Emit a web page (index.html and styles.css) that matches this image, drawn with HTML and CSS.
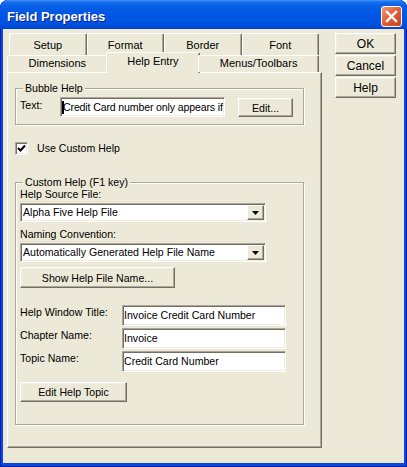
FILE: index.html
```html
<!DOCTYPE html>
<html lang="en">
<head>
    <meta charset="UTF-8">
    <meta name="viewport" content="width=device-width, initial-scale=1.0">
    <title>Field Properties</title>
    <link rel="stylesheet" href="styles.css">
</head>
<body>
    <div class="window">
        <div class="titlebar">
            <span class="title">Field Properties</span>
            <span class="close">
                <svg width="13" height="13" viewBox="0 0 13 13">
                    <path d="M2 2 L11 11 M11 2 L2 11" stroke="#fff" stroke-width="2.4" stroke-linecap="square"/>
                </svg>
            </span>
        </div>

        <div class="client">
            <div class="sheet">
                <!-- back row of tabs -->
                <div class="tabrow back">
                    <div class="tab">Setup</div>
                    <div class="tab">Format</div>
                    <div class="tab">Border</div>
                    <div class="tab">Font</div>
                </div>
                <!-- front row, the selected tab sits here -->
                <div class="tabrow front">
                    <div class="tab">Dimensions</div>
                    <div class="tab active">Help Entry</div>
                    <div class="tab">Menus/Toolbars</div>
                </div>

                <div class="panel">
                    <fieldset class="group bubble">
                        <legend>Bubble Help</legend>
                        <div class="row">
                            <span class="lbl-text">Text:</span>
                            <div class="field bubble-field"><span class="caret"></span>Credit Card number only appears if</div>
                            <button class="btn edit-btn">Edit...</button>
                        </div>
                    </fieldset>

                    <label class="check">
                        <span class="checkbox">
                            <svg width="9" height="9" viewBox="0 0 9 9">
                                <path d="M1 4 L3.5 6.5 L8 1.5" fill="none" stroke="#000" stroke-width="2"/>
                            </svg>
                        </span>
                        Use Custom Help
                    </label>

                    <fieldset class="group custom">
                        <legend>Custom Help (F1 key)</legend>
                        <div class="caption first">Help Source File:</div>
                        <div class="combo">
                            <span class="combo-text">Alpha Five Help File</span>
                            <span class="combo-arrow">
                                <svg width="7" height="4" viewBox="0 0 7 4"><polygon points="0,0 7,0 3.5,4" fill="#000"/></svg>
                            </span>
                        </div>
                        <div class="caption">Naming Convention:</div>
                        <div class="combo">
                            <span class="combo-text">Automatically Generated Help File Name</span>
                            <span class="combo-arrow">
                                <svg width="7" height="4" viewBox="0 0 7 4"><polygon points="0,0 7,0 3.5,4" fill="#000"/></svg>
                            </span>
                        </div>
                        <button class="btn show-btn">Show Help File Name...</button>

                        <div class="help-grid">
                            <span class="lbl">Help Window Title:</span>
                            <div class="field">Invoice Credit Card Number</div>
                            <span class="lbl">Chapter Name:</span>
                            <div class="field">Invoice</div>
                            <span class="lbl">Topic Name:</span>
                            <div class="field">Credit Card Number</div>
                        </div>

                        <button class="btn topic-btn">Edit Help Topic</button>
                    </fieldset>
                </div>
            </div>

            <div class="actions">
                <button class="btn">OK</button>
                <button class="btn">Cancel</button>
                <button class="btn">Help</button>
            </div>
        </div>
    </div>
</body>
</html>
```

FILE: styles.css
```css
body {
    margin: 0;
    background: #fff;
    font-family: "Liberation Sans", Arial, sans-serif;
    font-size: 10.6px;
    color: #000;
}

/* window frame */
.window {
    width: 407px;
    height: 467px;
    box-sizing: border-box;
    display: flex;
    flex-direction: column;
    background: #0a47e0;
    border-radius: 8px 8px 0 0;
    box-shadow: inset 1px 0 #001ea8, inset -1px 0 #001ea8, inset 0 -1px #001ea8;
    overflow: hidden;
}
.titlebar {
    height: 29px;
    flex: none;
    box-sizing: border-box;
    display: flex;
    align-items: center;
    padding: 3px 5px 0 7px;
    border-radius: 8px 8px 0 0;
    background: linear-gradient(#4a93f7 0px, #1570ee 2px, #0a62e8 5px, #0058e4 12px, #0054e2 22px, #004bd6 27px, #0044c8 29px);
}
.title {
    flex: 1;
    color: #fff;
    font-weight: bold;
    font-size: 13px;
    text-shadow: 1px 1px #0a1e8a;
}
.close {
    width: 21px;
    height: 21px;
    box-sizing: border-box;
    display: flex;
    align-items: center;
    justify-content: center;
    border: 1px solid #fff;
    border-radius: 3px;
    background: linear-gradient(135deg, #f09a7c 0%, #e0603c 45%, #c8401c 100%);
}

.client {
    flex: 1;
    margin: 0 3px 4px;
    background: #ece9d8;
    display: flex;
    align-items: flex-start;
}

/* tabs */
.sheet {
    margin: 4px 0 0 4px;
    width: 315px;
}
.tabrow {
    display: flex;
}
.tabrow.back {
    margin-left: 2px;
    width: 310px;
    height: 22px;
}
.tabrow.front {
    width: 312px;
    height: 17px;
    position: relative;
    z-index: 1;
}
.tab {
    box-sizing: border-box;
    border: 1px solid;
    border-color: #fff #716f64 transparent #fff;
    border-bottom: 0;
    border-radius: 2px 2px 0 0;
    box-shadow: inset -1px 0 #aca899;
    background: #ece9d8;
    text-align: center;
    font-size: 11px;
    line-height: 13px;
    white-space: nowrap;
}
.back .tab {
    flex: 1;
    padding-top: 5px;
}
.front .tab {
    flex: auto;
    padding: 1px 8px 0;
}
.front .tab.active {
    height: 21px;
    margin: -3px -2px 0;
    padding-top: 2px;
}

/* tab page */
.panel {
    box-sizing: border-box;
    height: 376px;
    border: 1px solid;
    border-color: #fff #716f64 #716f64 #fff;
    box-shadow: inset -1px -1px #aca899;
    padding: 0 17px 0 7px;
}
.group {
    margin: 9px 0 0;
    padding: 0 4px 7px;
    min-width: 0;
    border: 1px solid #aca899;
    box-shadow: inset 1px 1px #fff, 1px 1px #fff;
}
.group legend {
    margin-left: 3px;
    padding: 0 2px;
    line-height: 13px;
    background: #ece9d8;
}

.row {
    display: flex;
    align-items: flex-start;
    margin-top: 2px;
}
.lbl-text {
    width: 40px;
    padding-top: 2px;
    line-height: 13px;
}

/* sunken edit boxes */
.field {
    box-sizing: border-box;
    height: 21px;
    padding: 0 1px;
    background: #fff;
    border: 1px solid;
    border-color: #aca899 #fff #fff #aca899;
    box-shadow: inset 1px 1px #716f64, inset -1px -1px #f1efe2;
    line-height: 19px;
    white-space: nowrap;
    overflow: hidden;
}
.bubble-field {
    width: 165px;
    height: 20px;
    line-height: 18px;
    letter-spacing: -0.15px;
}
.caret {
    display: inline-block;
    width: 2px;
    height: 13px;
    margin-right: -1px;
    background: #000;
    vertical-align: -3px;
}

/* raised push buttons */
.btn {
    box-sizing: border-box;
    height: 21px;
    padding: 0;
    background: #ece9d8;
    border: 1px solid;
    border-color: #fff #716f64 #716f64 #fff;
    box-shadow: inset -1px -1px #aca899, inset 1px 1px #f1efe2;
    font: inherit;
    color: #000;
    text-align: center;
}
.edit-btn {
    width: 55px;
    height: 19px;
    margin: 1px 0 0 13px;
}

.check {
    display: flex;
    align-items: center;
    gap: 9px;
    margin-top: 17px;
    line-height: 13px;
}
.checkbox {
    width: 13px;
    height: 13px;
    box-sizing: border-box;
    display: flex;
    align-items: center;
    justify-content: center;
    background: #fff;
    border: 1px solid;
    border-color: #aca899 #fff #fff #aca899;
    box-shadow: inset 1px 1px #716f64, inset -1px -1px #f1efe2;
}

.group.custom {
    margin-top: 21px;
    padding-bottom: 22px;
}
.caption {
    line-height: 13px;
    margin-top: 6px;
}
.caption.first {
    margin-top: -1px;
}

/* drop-down lists */
.combo {
    box-sizing: border-box;
    width: 246px;
    height: 19px;
    margin-top: 2px;
    padding: 1px;
    display: flex;
    background: #fff;
    border: 1px solid;
    border-color: #aca899 #fff #fff #aca899;
    box-shadow: inset 1px 1px #716f64, inset -1px -1px #f1efe2;
}
.combo-text {
    flex: 1;
    padding-left: 1px;
    line-height: 15px;
    white-space: nowrap;
    overflow: hidden;
}
.combo-arrow {
    width: 17px;
    height: 15px;
    box-sizing: border-box;
    display: flex;
    align-items: center;
    justify-content: center;
    background: #ece9d8;
    border: 1px solid;
    border-color: #fff #716f64 #716f64 #fff;
    box-shadow: inset -1px -1px #aca899;
}

.show-btn {
    display: block;
    width: 155px;
    margin-top: 5px;
}

.help-grid {
    display: grid;
    grid-template-columns: 102px 164px;
    grid-auto-rows: 21px;
    row-gap: 2px;
    margin-top: 17px;
}
.lbl {
    padding-top: 1px;
    line-height: 13px;
}

.topic-btn {
    display: block;
    width: 107px;
    height: 20px;
    margin-top: 10px;
}

/* OK / Cancel / Help */
.actions {
    margin: 4px 0 0 13px;
    display: flex;
    flex-direction: column;
    gap: 1px;
}
.actions .btn {
    width: 61px;
    font-size: 12px;
}
```
